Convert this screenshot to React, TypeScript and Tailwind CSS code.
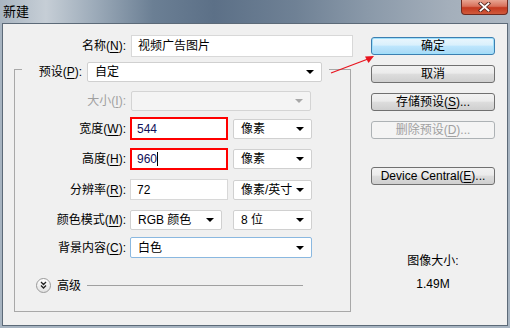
import React from 'react'

const font = "font-['Liberation_Sans','Noto_Sans_CJK_SC',sans-serif]"

const Arrow = ({ dim }: { dim?: boolean }) => (
  <svg width="8" height="4" viewBox="0 0 8 4" className="shrink-0">
    <path d="M0 0 L8 0 L4 4 Z" fill={dim ? '#a8a8a8' : '#000'} />
  </svg>
)

const U = ({ children }: { children: React.ReactNode }) => (
  <span className="underline underline-offset-[2px]">{children}</span>
)

const Label = ({ w, children, dim }: { w: string; children: React.ReactNode; dim?: boolean }) => (
  <div className={`${w} shrink-0 text-right ${dim ? 'text-[#a0a0a0]' : 'text-black'}`}>{children}</div>
)

const Select = ({ w, text, h = 'h-[20px]', border = 'border-[#d0d0d0]' }: { w: string; text?: string; h?: string; border?: string }) => (
  <div className={`${w} ${h} flex items-center justify-between bg-white border ${border} rounded-[2px] pl-[7px] pr-[7px]`}>
    <span>{text}</span>
    <Arrow />
  </div>
)

const Button = ({ children, primary, disabled }: { children: React.ReactNode; primary?: boolean; disabled?: boolean }) => {
  let cls = 'border-[#707070] bg-[linear-gradient(#f2f2f2_0%,#ebebeb_45%,#dddddd_50%,#cfcfcf_100%)] text-black'
  if (primary) cls = 'border-[#3c7fb1] bg-[linear-gradient(#eaf6fd_0%,#d9f0fc_45%,#bee6fd_50%,#a7d9f5_100%)] text-black shadow-[inset_0_0_0_1px_#9fe0fb]'
  if (disabled) cls = 'border-[#adb2b5] bg-[#f4f4f4] text-[#a0a0a0]'
  return (
    <div className={`w-[124px] h-[18px] border rounded-[3px] flex items-center justify-center ${cls}`}>
      {children}
    </div>
  )
}

export default function App() {
  return (
    <div className={`w-[510px] h-[328px] flex flex-col bg-[#a7b4c1] text-[12px] leading-[14px] ${font}`}>
      {/* title bar */}
      <div className="relative h-[23px] shrink-0 flex items-center pl-[3px] bg-[linear-gradient(90deg,#a9b5c1_0%,#c6ced6_9%,#9fadbb_18%,#6b7f94_30%,#5c7087_42%,#6f8195_58%,#8a99a9_72%,#a4afbb_88%,#adb8c3_100%)]">
        <span className="text-[13px] text-black font-['Noto_Sans_CJK_SC',sans-serif] -mt-[2px]">新建</span>
        <div className="absolute right-[2px] top-0 w-[47px] h-[15px] rounded-b-[4px] border border-t-0 border-[#6e2a20] bg-[linear-gradient(#e8a592_0%,#d8705a_45%,#c4391f_55%,#d05a3c_100%)] flex items-center justify-center">
          <svg width="13" height="10" viewBox="0 0 13 10">
            <path d="M2.5 1.5 L10.5 8.5 M10.5 1.5 L2.5 8.5" stroke="#5a2a22" strokeWidth="3.6" strokeLinecap="square" />
            <path d="M2.5 1.5 L10.5 8.5 M10.5 1.5 L2.5 8.5" stroke="#ffffff" strokeWidth="1.8" strokeLinecap="square" />
          </svg>
        </div>
      </div>

      {/* dialog body */}
      <div className="relative mx-[2px] h-[303px] border border-[#5c6a78] bg-[#f0f0f0] flex">
        {/* left column */}
        <div className="w-[353px] flex flex-col">
          <div className="mt-[11px] flex items-center">
            <Label w="w-[123px]">名称(<U>N</U>):</Label>
            <div className="ml-[5px] w-[222px] h-[22px] bg-white border border-[#d8d8d8] flex items-center pl-[6px]">视频广告图片</div>
          </div>

          {/* group box */}
          <div className="mt-[12px] ml-[11px] w-[337px] h-[243px] border border-[#a8a8a8] flex flex-col">
            <div className="-mt-[8px] ml-[7px] w-fit bg-[#f0f0f0] pr-[7px] flex items-center">
              <Label w="w-[60px]">预设(<U>P</U>):</Label>
              <div className="ml-[5px]">
                <Select w="w-[235px]" text="自定" />
              </div>
            </div>

            <div className="mt-[9px] flex items-center">
              <Label w="w-[111px]" dim>大小(<U>I</U>):</Label>
              <div className="ml-[5px] w-[180px] h-[20px] border border-[#d4d4d4] bg-[#f4f4f4] rounded-[2px] flex items-center justify-end pr-[7px]">
                <Arrow dim />
              </div>
            </div>

            <div className="mt-[6px] flex items-center">
              <Label w="w-[111px]">宽度(<U>W</U>):</Label>
              <div className="ml-[4px] w-[98px] h-[23px] border-2 border-[#ff0000] bg-white flex items-center pl-[5px] text-[#10105a]">544</div>
              <div className="ml-[5px]">
                <Select w="w-[79px]" text="像素" />
              </div>
            </div>

            <div className="mt-[8px] flex items-center">
              <Label w="w-[111px]">高度(<U>H</U>):</Label>
              <div className="ml-[4px] w-[98px] h-[22px] border-2 border-[#ff0000] bg-white flex items-center pl-[5px] text-[#10105a]">
                960<span className="w-px h-[14px] bg-black" />
              </div>
              <div className="ml-[5px]">
                <Select w="w-[79px]" text="像素" />
              </div>
            </div>

            <div className="mt-[9px] flex items-center">
              <Label w="w-[111px]">分辨率(<U>R</U>):</Label>
              <div className="ml-[4px] w-[98px] h-[21px] border border-[#d8d8d8] bg-white flex items-center pl-[6px]">72</div>
              <div className="ml-[5px]">
                <Select w="w-[79px]" text="像素/英寸" />
              </div>
            </div>

            <div className="mt-[10px] flex items-center">
              <Label w="w-[111px]">颜色模式(<U>M</U>):</Label>
              <div className="ml-[4px]">
                <Select w="w-[92px]" text="RGB 颜色" />
              </div>
              <div className="ml-[11px]">
                <Select w="w-[79px]" text="8 位" />
              </div>
            </div>

            <div className="mt-[7px] flex items-center">
              <Label w="w-[111px]">背景内容(<U>C</U>):</Label>
              <div className="ml-[4px]">
                <Select w="w-[182px]" h="h-[21px]" border="border-[#8ab8e0]" text="白色" />
              </div>
            </div>

            <div className="mt-[19px] h-[16px] flex items-center">
              <div className="ml-[21px] w-[15px] h-[15px] rounded-full border border-[#9a9a9a] bg-[linear-gradient(#ffffff,#e2e2e2)] flex items-center justify-center">
                <svg width="7" height="8" viewBox="0 0 7 8">
                  <path d="M1 1 L3.5 3.5 L6 1 M1 4.5 L3.5 7 L6 4.5" stroke="#222" strokeWidth="1.3" fill="none" />
                </svg>
              </div>
              <span className="ml-[6px] font-['Noto_Sans_CJK_SC',sans-serif]">高级</span>
              <div className="ml-[6px] w-[216px] h-px bg-[#a0a0a0]" />
            </div>
          </div>
        </div>

        {/* right column */}
        <div className="ml-[15px] w-[124px] flex flex-col items-center">
          <div className="mt-[13px]"><Button primary>确定</Button></div>
          <div className="mt-[10px]"><Button>取消</Button></div>
          <div className="mt-[10px]"><Button>存储预设(<U>S</U>)...</Button></div>
          <div className="mt-[10px]"><Button disabled>删除预设(<U>D</U>)...</Button></div>
          <div className="mt-[28px]"><Button>Device Central(<U>E</U>)...</Button></div>
          <div className="mt-[68px] h-[16px] flex items-center">图像大小:</div>
          <div className="mt-[7px] h-[16px] flex items-center">1.49M</div>
        </div>

        {/* annotation arrow */}
        <svg className="absolute left-[325px] top-[28px]" width="50" height="25" viewBox="0 0 50 25">
          <path d="M3 21 L40 7" stroke="#e8141e" strokeWidth="1.3" />
          <path d="M46 4 L37 4.5 L40.5 11 Z" fill="#e8141e" />
        </svg>
      </div>
    </div>
  )
}
